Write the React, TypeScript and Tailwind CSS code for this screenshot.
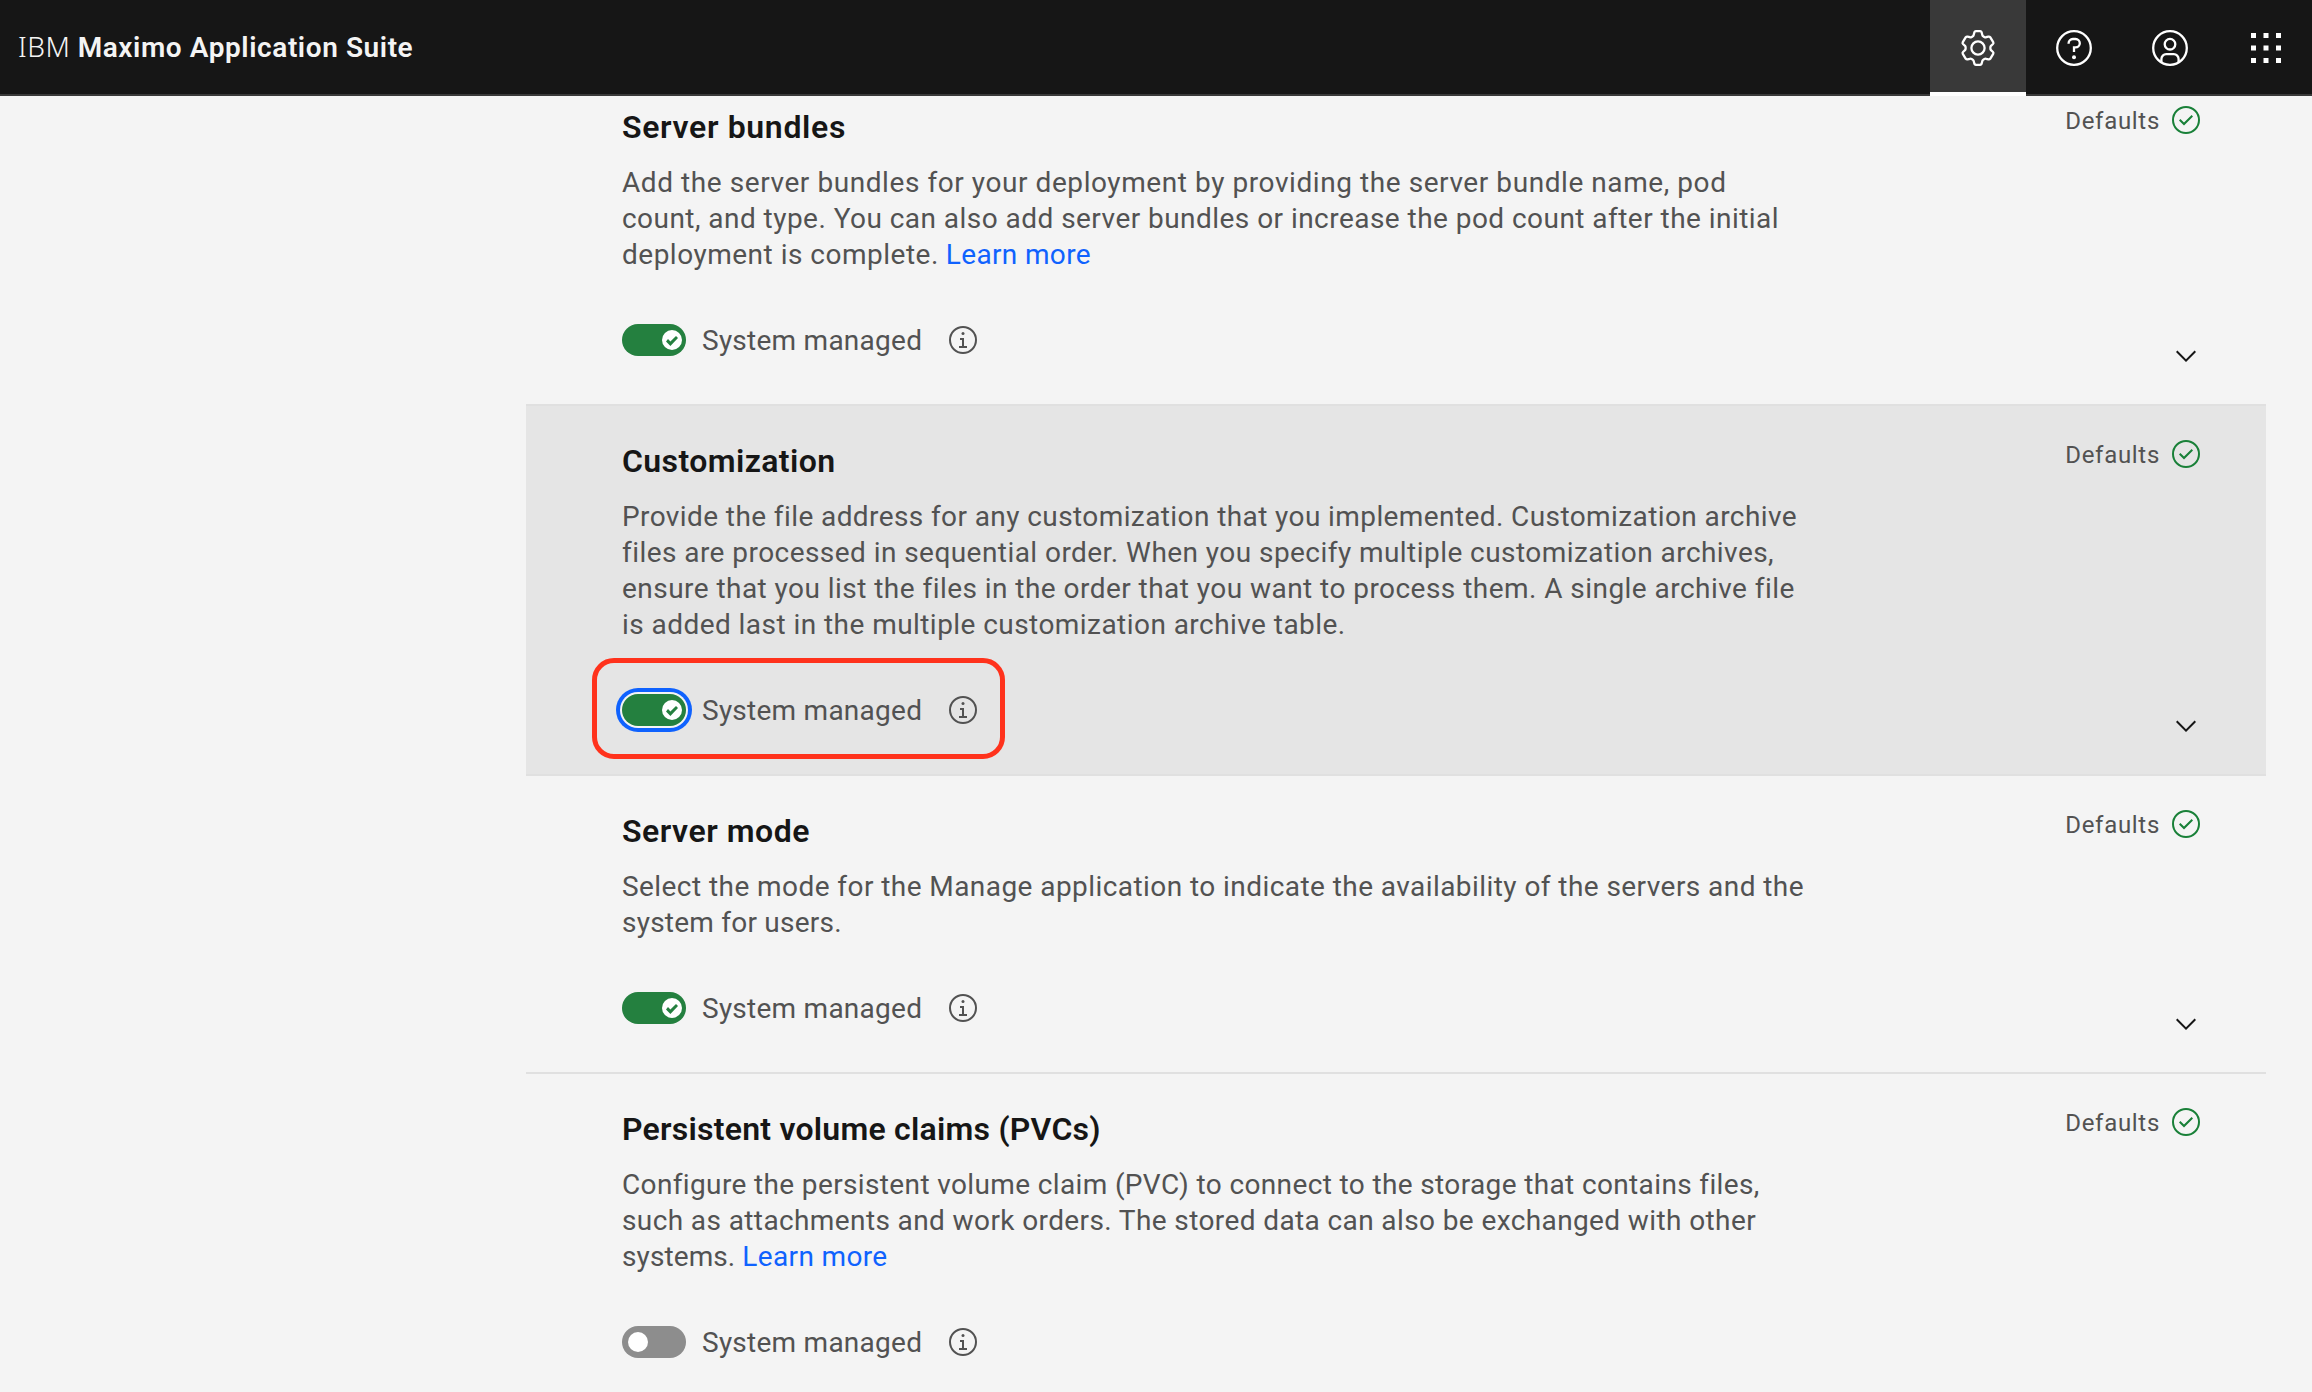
import type { ReactNode } from "react";

type Line = { text: string; tracking: string; link?: boolean };

type SectionData = {
  title: string;
  titleTracking: string;
  lines: Line[];
  on: boolean;
  selected?: boolean;
  collapsible: boolean;
};

const sections: SectionData[] = [
  {
    title: "Server bundles",
    titleTracking: "tracking-[0.66px]",
    lines: [
      { text: "Add the server bundles for your deployment by providing the server bundle name, pod", tracking: "tracking-[0.57px]" },
      { text: "count, and type. You can also add server bundles or increase the pod count after the initial", tracking: "tracking-[0.457px]" },
      { text: "deployment is complete.", tracking: "tracking-[0.5px]", link: true },
    ],
    on: true,
    collapsible: true,
  },
  {
    title: "Customization",
    titleTracking: "tracking-[0.41px]",
    lines: [
      { text: "Provide the file address for any customization that you implemented. Customization archive", tracking: "tracking-[0.405px]" },
      { text: "files are processed in sequential order. When you specify multiple customization archives,", tracking: "tracking-[0.445px]" },
      { text: "ensure that you list the files in the order that you want to process them. A single archive file", tracking: "tracking-[0.455px]" },
      { text: "is added last in the multiple customization archive table.", tracking: "tracking-[0.445px]" },
    ],
    on: true,
    selected: true,
    collapsible: true,
  },
  {
    title: "Server mode",
    titleTracking: "tracking-[0.52px]",
    lines: [
      { text: "Select the mode for the Manage application to indicate the availability of the servers and the", tracking: "tracking-[0.434px]" },
      { text: "system for users.", tracking: "tracking-[0.23px]" },
    ],
    on: true,
    collapsible: true,
  },
  {
    title: "Persistent volume claims (PVCs)",
    titleTracking: "tracking-[0.235px]",
    lines: [
      { text: "Configure the persistent volume claim (PVC) to connect to the storage that contains files,", tracking: "tracking-[0.365px]" },
      { text: "such as attachments and work orders. The stored data can also be exchanged with other", tracking: "tracking-[0.39px]" },
      { text: "systems.", tracking: "tracking-[0.1px]", link: true },
    ],
    on: false,
    collapsible: false,
  },
];

function HeaderButton({ active, label, children }: { active?: boolean; label: string; children: ReactNode }) {
  return (
    <button
      aria-label={label}
      className={
        "flex h-24 w-24 shrink-0 items-center justify-center text-white " +
        (active ? "border-b-4 border-white bg-[#393939] pt-1" : "")
      }
    >
      <svg viewBox="0 0 20 20" className="size-10" fill="none" stroke="currentColor" strokeWidth="1.15">
        {children}
      </svg>
    </button>
  );
}

function Header() {
  return (
    <header className="relative z-10 flex h-24 justify-between overflow-hidden bg-[#161616] shadow-[inset_0_-2px_0_#393939]">
      <div className="pl-[18px] text-[28px] leading-[92px] whitespace-nowrap text-[#f4f4f4]">
        <span className="font-['Noto_Sans'] font-light tracking-[0.6px]">IBM</span>
        <span className="ml-[7px] font-semibold tracking-[0.58px]">Maximo Application Suite</span>
      </div>
      <nav className="-mr-[2px] flex">
        <HeaderButton active label="Settings">
          <path
            strokeLinejoin="round"
            d="M10 1.6H11.1Q11.6 1.6 11.8 2.1L12.2 3.6Q12.3 4 12.8 4.3L13.2 4.5Q13.7 4.8 14.1 4.6L15.2 4.3Q15.8 4.2 16.1 4.6L17.6 7.1Q17.9 7.6 17.5 8L16.5 8.9Q16.2 9.2 16.2 9.6V10.4Q16.2 10.8 16.5 11.1L17.5 12Q17.9 12.4 17.6 12.9L16.1 15.4Q15.8 15.8 15.2 15.7L14.1 15.4Q13.7 15.2 13.2 15.5L12.8 15.7Q12.3 16 12.2 16.4L11.8 17.9Q11.6 18.4 11.1 18.4H8.9Q8.4 18.4 8.2 17.9L7.8 16.4Q7.7 16 7.2 15.7L6.8 15.5Q6.3 15.2 5.9 15.4L4.8 15.7Q4.2 15.8 3.9 15.4L2.4 12.9Q2.1 12.4 2.5 12L3.5 11.1Q3.8 10.8 3.8 10.4V9.6Q3.8 9.2 3.5 8.9L2.5 8Q2.1 7.6 2.4 7.1L3.9 4.6Q4.2 4.2 4.8 4.3L5.9 4.6Q6.3 4.8 6.8 4.5L7.2 4.3Q7.7 4 7.8 3.6L8.2 2.1Q8.4 1.6 8.9 1.6Z"
          />
          <circle cx="10" cy="10" r="3.3" />
        </HeaderButton>
        <HeaderButton label="Help">
          <circle cx="10" cy="10" r="8.4" />
          <path d="M7.3 7.9V7.6A2.1 2.1 0 0 1 9.4 5.5H10.8A2.1 2.1 0 0 1 10.8 9.7H10V12" />
          <circle cx="10" cy="14.6" r="1" fill="currentColor" stroke="none" />
        </HeaderButton>
        <HeaderButton label="User">
          <circle cx="10" cy="10" r="8.4" />
          <circle cx="10" cy="8.1" r="2.65" />
          <path d="M5.7 17V15.5A2.4 2.4 0 0 1 8.1 13.1H11.9A2.4 2.4 0 0 1 14.3 15.5V17" />
        </HeaderButton>
        <HeaderButton label="App switcher">
          <path
            fill="currentColor"
            stroke="none"
            d="M2.5 2.5h2.5v2.5h-2.5zM8.75 2.5h2.5v2.5h-2.5zM15 2.5h2.5v2.5h-2.5zM2.5 8.75h2.5v2.5h-2.5zM8.75 8.75h2.5v2.5h-2.5zM15 8.75h2.5v2.5h-2.5zM2.5 15h2.5v2.5h-2.5zM8.75 15h2.5v2.5h-2.5zM15 15h2.5v2.5h-2.5z"
          />
        </HeaderButton>
      </nav>
    </header>
  );
}

function Toggle({ on, focused }: { on: boolean; focused?: boolean }) {
  return (
    <button
      role="switch"
      aria-checked={on}
      aria-label="System managed"
      className={
        "flex h-8 w-16 items-center rounded-full " +
        (on ? "justify-end bg-[#24803f] pr-1 " : "justify-start bg-[#8d8d8d] pl-[6px] ") +
        (focused ? "shadow-[0_0_0_2px_#f4f4f4,0_0_0_6px_#0f62fe]" : "")
      }
    >
      <span className="flex size-5 items-center justify-center rounded-full bg-white">
        {on && (
          <svg viewBox="0 0 6 5" className="mt-px h-[10px] w-3 fill-[#24803f]">
            <path d="M2.2 2.7L5 0 6 1 2.2 5 0 2.7 1 1.5z" />
          </svg>
        )}
      </span>
    </button>
  );
}

function InfoIcon() {
  return (
    <svg viewBox="0 0 32 32" className="size-8 fill-[#525252]">
      <path d="M17 22V14H13V16H15V22H12V24H20V22Z" />
      <circle cx="16" cy="9.5" r="1.5" />
      <path d="M16 30A14 14 0 1 1 30 16 14 14 0 0 1 16 30ZM16 4A12 12 0 1 0 28 16 12 12 0 0 0 16 4Z" />
    </svg>
  );
}

function Section({ data }: { data: SectionData }) {
  return (
    <section
      className={
        "flex justify-between border-b-2 border-[#e0e0e0] pr-16 pl-24 " + (data.selected ? "bg-[#e5e5e5]" : "")
      }
    >
      <div className="pt-[35px] pb-12">
        <h2 className={"text-[32px] leading-10 font-semibold whitespace-nowrap text-[#161616] " + data.titleTracking}>
          {data.title}
        </h2>
        <p className="mt-[18px] text-[28px] leading-9 text-[#525252]">
          {data.lines.map((line) => (
            <span key={line.text} className="block whitespace-nowrap">
              <span className={line.tracking}>{line.text}</span>
              {line.link && (
                <a href="#" className="ml-[7px] tracking-[0.35px] text-[#0f62fe]">
                  Learn more
                </a>
              )}
            </span>
          ))}
        </p>
        <div className="relative mt-[51px] flex h-8 items-center">
          <Toggle on={data.on} focused={data.selected} />
          <span className="mt-0.5 ml-4 w-[245px] text-[28px] leading-8 tracking-[0.25px] whitespace-nowrap text-[#525252]">
            System managed
          </span>
          <InfoIcon />
          {data.selected && (
            <div className="pointer-events-none absolute -top-9 -left-[30px] h-[101px] w-[413px] rounded-[22px] border-5 border-[#ff321c]" />
          )}
        </div>
      </div>
      <div className="flex flex-col items-end justify-between py-8">
        <div className="flex h-8 items-center gap-[10px]">
          <span className="mt-0.5 text-[24px] leading-8 tracking-[0.7px] text-[#525252]">Defaults</span>
          <svg viewBox="0 0 32 32" className="size-8 fill-[#198038]">
            <path d="M14 21.414L9 16.413 10.413 15 14 18.586 21.585 11 23 12.415 14 21.414Z" />
            <path d="M16 2A14 14 0 1 0 30 16 14 14 0 0 0 16 2ZM16 28A12 12 0 1 1 28 16 12 12 0 0 1 16 28Z" />
          </svg>
        </div>
        {data.collapsible && (
          <svg viewBox="0 0 16 16" className="size-8 fill-[#161616]">
            <path d="M8 11L3 6 3.7 5.3 8 9.6 12.3 5.3 13 6Z" />
          </svg>
        )}
      </div>
    </section>
  );
}

export default function App() {
  return (
    <div className="h-screen overflow-hidden bg-[#f4f4f4] font-[Roboto,sans-serif]">
      <Header />
      <main className="-mt-6 mr-[46px] ml-[526px]">
        {sections.map((s) => (
          <Section key={s.title} data={s} />
        ))}
      </main>
    </div>
  );
}
